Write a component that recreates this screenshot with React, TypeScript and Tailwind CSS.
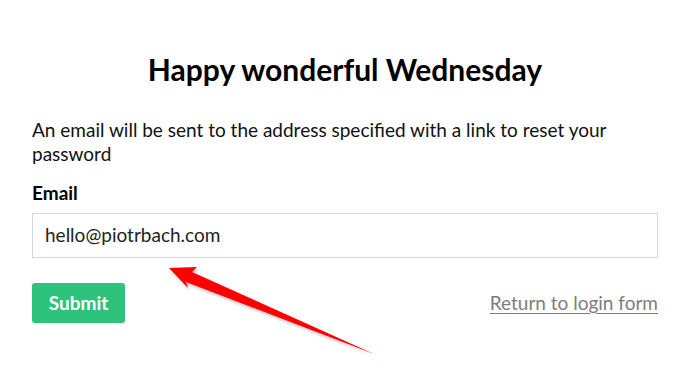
import React from 'react';

function Arrow() {
  return (
    <svg
      className="absolute left-0 top-0 pointer-events-none"
      width="690"
      height="376"
      viewBox="0 0 690 376"
    >
      <defs>
        <filter id="arrowShadow" x="-10%" y="-10%" width="120%" height="130%">
          <feDropShadow dx="1" dy="2" stdDeviation="1.5" floodColor="#000" floodOpacity="0.25" />
        </filter>
      </defs>
      <polygon
        points="169,268 197,267 192,272 374,354 186,282 188,288"
        fill="#ff0000"
        filter="url(#arrowShadow)"
      />
    </svg>
  );
}

export default function App() {
  return (
    <div className="relative w-[690px] h-[376px] bg-white px-8 font-['Lato','Noto_Sans',sans-serif] text-[#111]">
      <h1 className="pt-[50px] text-center text-[30px] leading-[38px] font-bold text-black">
        Happy wonderful Wednesday
      </h1>

      <p className="mt-[30px] text-[19px] leading-[24px]">
        An email will be sent to the address specified with a link to reset your password
      </p>

      <label className="block mt-[15px] text-[19px] leading-[24px] font-bold text-black">Email</label>
      <div className="mt-2 h-[45px] w-full border border-[#d6d6d6] flex items-center px-3 text-[19px] text-[#222]">
        hello@piotrbach.com
      </div>

      <div className="mt-[25px] flex items-center justify-between">
        <button className="h-10 w-[93px] rounded-[3px] bg-[#2dc37c] text-white text-[19px] font-bold">
          Submit
        </button>
        <a className="text-[19px] text-[#7d7d7d] underline underline-offset-[3px] decoration-1">
          Return to login form
        </a>
      </div>

      <Arrow />
    </div>
  );
}
